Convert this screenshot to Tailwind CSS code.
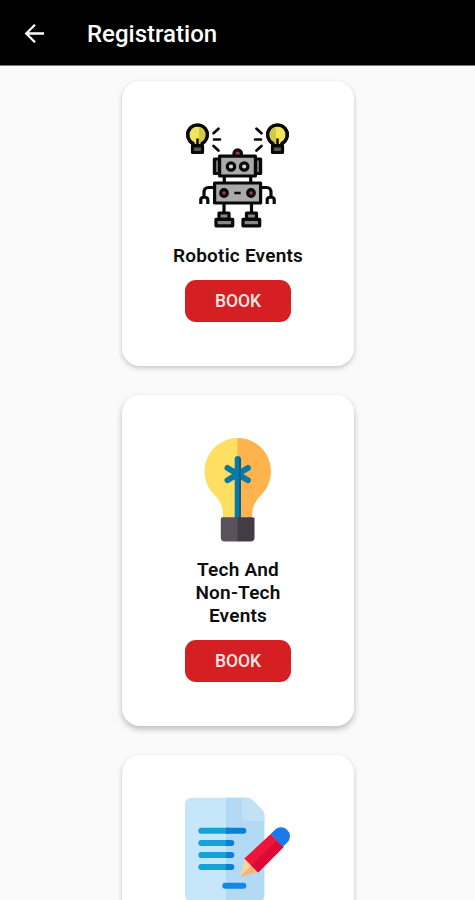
<!DOCTYPE html>
<html lang="en">
<head>
<meta charset="utf-8">
<title>Registration</title>
<script src="https://cdn.jsdelivr.net/npm/@tailwindcss/browser@4"></script>
</head>
<body class="flex h-[900px] flex-col overflow-hidden bg-[#fafafa] font-['Roboto',sans-serif] text-[#0c0c0c]">
<header class="flex h-[66px] shrink-0 items-center border-b border-[#777] bg-black pt-1 pl-[22px] text-white">
  <svg class="mr-[39px] size-[26px] shrink-0" viewBox="0 0 26 26" fill="none" stroke="#fff" stroke-width="2.3"><path d="M22 11.500H4.500M13 2.700 4.200 11.500l8.800 8.800"/></svg>
  <h1 class="pb-[2px] text-[24px] leading-none font-medium">Registration</h1>
</header>
<main class="flex min-h-0 flex-1 flex-col items-center gap-[29px] overflow-hidden pt-[15px]">
  <section class="flex h-[284.500px] w-[232px] shrink-0 flex-col items-center rounded-[18px] bg-white pt-[42px] shadow-[0_2px_5px_rgba(0,0,0,0.22)]">
    <svg class="size-[106px] shrink-0" viewBox="185 122.500 106 106" stroke="#090909" stroke-width="3.200" stroke-linejoin="round">
      <defs>
        <g id="lamp">
          <path d="M193 145v-2A9.800 9.800 0 1 1 202 143V145Z" fill="#f2e45c"/>
          <path d="M199 126.500q8 1 7 9-.5 4-4 6.500V145h-3Z" fill="#d5c94a" stroke="none"/>
          <path d="M193 145v-2A9.800 9.800 0 1 1 202 143V145Z" fill="none"/>
          <path d="M197.500 144v-6" stroke-width="2.500"/>
          <path d="M192.500 145.500h10v6.500h-10Z" fill="#62565c"/>
          <path d="m213.500 132.700 5-4.500M214 139h6M213.500 145.500l5 4.500" fill="none" stroke-width="2.700" stroke-linecap="round"/>
        </g>
      </defs>
      <use href="#lamp"/>
      <use href="#lamp" transform="matrix(-1 0 0 1 475 0)"/>
      <path d="M224.300 176v7M250.700 176v7M224 202v10M251.500 202v10" fill="none"/>
      <path d="M234 156v-3a3.700 3.700 0 0 1 7.400 0v3Z" fill="#a43942"/>
      <path d="M214.400 158.500h6v14.500h-6ZM254.600 158.500h6v14.500h-6Z" fill="#737373"/>
      <path d="M219.600 155.700h35.800v19.800h-35.800Z" fill="#aaa"/>
      <g fill="#d5d8d8"><circle cx="231" cy="166" r="3.700"/><circle cx="244.200" cy="166" r="3.700"/></g>
      <path d="M213 187h-4.500q-4.500 0-4.500 5v5M262 187h4.500q4.500 0 4.500 5v5M200.800 203.500V199q0-2 3.200-2.500 3.800.5 3.800 2.500v4.500M267.200 203.500V199q0-2 3.800-2.500 3.200.5 3.200 2.500v4.500" fill="none"/>
      <path d="M214.600 182.500h46v20h-46Z" fill="#aaa"/>
      <g fill="#b53a43"><circle cx="224" cy="192.500" r="3.300"/><circle cx="251" cy="192.500" r="3.300"/></g>
      <path d="M234.300 192.500h6.400" stroke-width="2.500"/>
      <path d="M219 212.500h10v6h-10ZM246.500 212.500h10v6h-10ZM216 218.800h16.700v6.500h-16.700ZM243 218.800h16.700v6.500h-16.700Z" fill="#888"/>
    </svg>
    <h2 class="mt-[15px] w-[150px] pl-px text-center text-[19px] leading-[23px] font-semibold tracking-[0.22px]">Robotic Events</h2>
    <button class="mt-[12.500px] h-[42px] w-[106px] shrink-0 rounded-[11px] bg-[#d61f22] pt-[2px] pl-px text-[17.500px] font-medium text-[#fbe9e5]">BOOK</button>
  </section>
  <section class="flex h-[331px] w-[232px] shrink-0 flex-col items-center rounded-[18px] bg-white pt-[42px] shadow-[0_3px_6px_rgba(0,0,0,0.26)]">
    <svg class="size-[106px] shrink-0" viewBox="185 437 106 106">
      <path d="M238 438a33.300 33.300 0 0 0-25 55.500q8.500 8 9.500 16.500.5 4 .5 9h15Z" fill="#ffdf61"/>
      <path d="M237.500 438a33.300 33.300 0 0 1 25 55.500q-8.500 8-10 16.500-.5 4-.5 9h-14.500Z" fill="#ffb34d"/>
      <path d="M237.700 459v60M227.500 468l20.400 12.200M247.900 468l-20.400 12.200" fill="none" stroke="#0879a6" stroke-width="6" stroke-linecap="round"/>
      <path d="M239 456.500q2 .8 2 3V519h-2Z" fill="#066184"/>
      <path d="M238 517.300v24.200h-13.200a4 4 0 0 1-4-4v-18.700a1.500 1.500 0 0 1 1.500-1.500Z" fill="#5a525c"/>
      <path d="M237.500 517.300h15.500a1.500 1.500 0 0 1 1.500 1.500v18.700a4 4 0 0 1-4 4h-13Z" fill="#433b46"/>
    </svg>
    <h2 class="mt-[15px] w-[110px] pl-px text-center text-[19px] leading-[23px] font-semibold tracking-[0.22px]">Tech And Non-Tech Events</h2>
    <button class="mt-[13px] h-[42px] w-[106px] shrink-0 rounded-[11px] bg-[#d61f22] pt-[2px] pl-px text-[17.500px] font-medium text-[#fbe9e5]">BOOK</button>
  </section>
  <section class="flex h-[285px] w-[232px] shrink-0 flex-col items-center rounded-[18px] bg-white pt-[42px] shadow-[0_2px_5px_rgba(0,0,0,0.22)]">
    <svg class="size-[106px] shrink-0" viewBox="185 797 106 106">
      <path d="M192 797.700h54q4 0 7 3l8 8q3.300 3 3.300 7V895q0 7-7 7H192q-7 0-7-7v-90q0-7.300 7-7.300Z" fill="#c6e7fa"/>
      <path d="M226 797.700h20q4 0 7 3l8 8q3.300 3 3.300 7V895q0 7-7 7H226Z" fill="#b3daf4"/>
      <path d="M246 797.700q4 0 7 3l8 8q3.300 3 3.300 7V821H248q-6 0-6-6v-17.300Z" fill="#c0e1f6"/>
      <path d="M201.300 830.700H226M201.300 843H226M201.300 855H226M201.300 867H226" stroke="#18a0d9" stroke-width="6" stroke-linecap="round"/>
      <path d="M226 827.700h17.300a3 3 0 0 1 0 6H226ZM226 840h5.300a3 3 0 0 1 0 6H226ZM226 852h5.300a3 3 0 0 1 0 6H226ZM226 864h5.300a3 3 0 0 1 0 6H226Z" fill="#087fd8"/>
      <path d="M226 827.700h3v6h-3ZM226 840h3v6h-3ZM226 852h3v6h-3ZM226 864h3v6h-3Z" fill="#087fd8"/>
      <path d="M225.300 885.700h18" stroke="#1289e8" stroke-width="6" stroke-linecap="round"/>
      <path d="M244.800 858.500 241 875.500q0 1.500 1.500 1l15.300-4.500Z" fill="#ffd39b"/>
      <path d="m251 866 6.800 6-15.300 4.500q-1.500.5-1.500-1Z" fill="#f2b679"/>
      <path d="m270.700 834 12.900 12.900-25.400 25.700-13.900-14.100Z" fill="#ee1539"/>
      <path d="m277 840.500 6.600 6.400-25.400 25.700-7-7.100Z" fill="#dc0a34"/>
      <path d="m270.700 834 4.300-4.300a8.500 8.500 0 0 1 12 0 8.500 8.500 0 0 1 0 13l-4.300 4.200Z" fill="#1c79e9"/>
    </svg>
  </section>
</main>
</body>
</html>
